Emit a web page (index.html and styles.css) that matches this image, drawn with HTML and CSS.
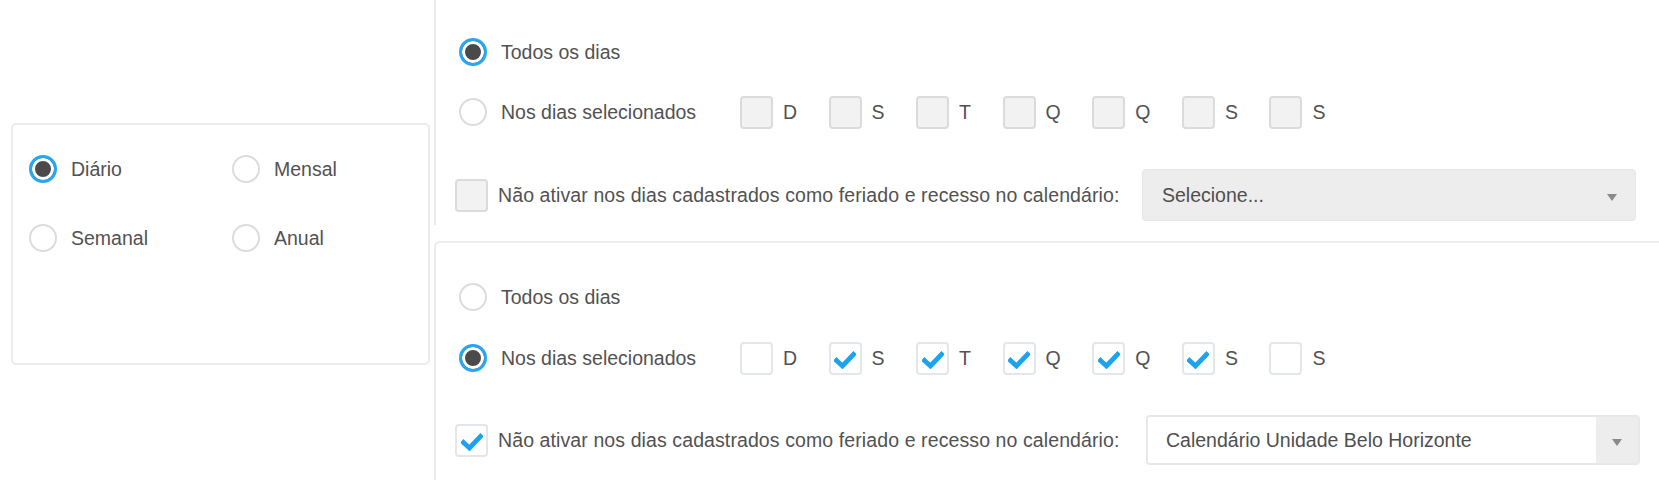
FILE: index.html
```html
<!DOCTYPE html>
<html lang="pt-BR">
<head>
<meta charset="utf-8">
<title>Recorrência</title>
<link rel="stylesheet" href="styles.css">
</head>
<body>
<div class="page">
  <div class="left">
    <div class="freq-card">
      <label class="radio-item"><span class="radio checked"></span><span>Diário</span></label>
      <label class="radio-item"><span class="radio"></span><span>Mensal</span></label>
      <label class="radio-item"><span class="radio"></span><span>Semanal</span></label>
      <label class="radio-item"><span class="radio"></span><span>Anual</span></label>
    </div>
  </div>
  <div class="right">
    <div class="panel panel-top">
      <div class="row">
        <label class="radio-item"><span class="radio checked"></span><span>Todos os dias</span></label>
      </div>
      <div class="row row-days">
        <label class="radio-item days-label"><span class="radio"></span><span>Nos dias selecionados</span></label>
        <div class="days">
          <span class="day"><span class="box disabled"></span>D</span>
          <span class="day"><span class="box disabled"></span>S</span>
          <span class="day"><span class="box disabled"></span>T</span>
          <span class="day"><span class="box disabled"></span>Q</span>
          <span class="day"><span class="box disabled"></span>Q</span>
          <span class="day"><span class="box disabled"></span>S</span>
          <span class="day"><span class="box disabled"></span>S</span>
        </div>
      </div>
      <div class="row row-holiday">
        <span class="box disabled"></span>
        <span class="holiday-label">Não ativar nos dias cadastrados como feriado e recesso no calendário:</span>
        <div class="select select-disabled"><span>Selecione...</span><span class="arrow"></span></div>
      </div>
    </div>
    <div class="panel panel-bottom">
      <div class="row">
        <label class="radio-item"><span class="radio"></span><span>Todos os dias</span></label>
      </div>
      <div class="row row-days">
        <label class="radio-item days-label"><span class="radio checked"></span><span>Nos dias selecionados</span></label>
        <div class="days">
          <span class="day"><span class="box"></span>D</span>
          <span class="day"><span class="box"><svg class="check" viewBox="0 0 22 18"><polyline points="2.5,9.5 8.5,15 19.5,3.5"/></svg></span>S</span>
          <span class="day"><span class="box"><svg class="check" viewBox="0 0 22 18"><polyline points="2.5,9.5 8.5,15 19.5,3.5"/></svg></span>T</span>
          <span class="day"><span class="box"><svg class="check" viewBox="0 0 22 18"><polyline points="2.5,9.5 8.5,15 19.5,3.5"/></svg></span>Q</span>
          <span class="day"><span class="box"><svg class="check" viewBox="0 0 22 18"><polyline points="2.5,9.5 8.5,15 19.5,3.5"/></svg></span>Q</span>
          <span class="day"><span class="box"><svg class="check" viewBox="0 0 22 18"><polyline points="2.5,9.5 8.5,15 19.5,3.5"/></svg></span>S</span>
          <span class="day"><span class="box"></span>S</span>
        </div>
      </div>
      <div class="row row-holiday">
        <span class="box"><svg class="check" viewBox="0 0 22 18"><polyline points="2.5,9.5 8.5,15 19.5,3.5"/></svg></span>
        <span class="holiday-label">Não ativar nos dias cadastrados como feriado e recesso no calendário:</span>
        <div class="select select-active"><span class="select-value">Calendário Unidade Belo Horizonte</span><span class="select-btn"><span class="arrow"></span></span></div>
      </div>
    </div>
  </div>
</div>
</body>
</html>
```
FILE: styles.css
```css
* { box-sizing: border-box; }

body {
  margin: 0;
  background: #ffffff;
  font-family: "Liberation Sans", Arial, sans-serif;
  font-size: 19.5px;
  color: #525252;
}

.page {
  display: flex;
  width: 1659px;
  height: 480px;
  overflow: hidden;
}

.left {
  flex: 0 0 434px;
  padding: 123px 0 0 11px;
}

.freq-card {
  width: 419px;
  height: 242px;
  border: 2px solid #eaecef;
  border-radius: 5px;
  padding: 24px 0 0 16px;
  display: grid;
  grid-template-columns: 203px 180px;
  grid-auto-rows: 40px;
  row-gap: 29px;
  align-content: start;
}

.radio-item {
  display: flex;
  align-items: center;
  gap: 14px;
  height: 40px;
}

.radio {
  flex: 0 0 28px;
  width: 28px;
  height: 28px;
  border-radius: 50%;
  border: 2px solid #dcdcdc;
  background: #ffffff;
}

.radio.checked {
  border: 3px solid #27a7f1;
  background: #4a4a4a;
  box-shadow: inset 0 0 0 3px #ffffff;
}

.right {
  flex: 1;
  display: flex;
  flex-direction: column;
}

.panel {
  border-left: 2px solid #eaecef;
}

.panel-top {
  height: 225px;
  padding: 32px 23px 0 23px;
}

.panel-bottom {
  flex: 1;
  margin-top: 16px;
  border-top: 2px solid #eaecef;
  border-top-left-radius: 6px;
  padding: 34px 19px 0 23px;
}

.row {
  display: flex;
  align-items: center;
  height: 40px;
}

.panel-top .row-days { margin-top: 20px; }
.panel-bottom .row-days { margin-top: 21px; }

.days-label {
  flex: 0 0 281px;
}

.days {
  display: flex;
  align-items: center;
  gap: 31.5px;
}

.day {
  display: flex;
  align-items: center;
  gap: 10px;
}

.box {
  flex: 0 0 33px;
  width: 33px;
  height: 33px;
  border: 2px solid #e3e6ea;
  border-radius: 4px;
  background: #ffffff;
  display: flex;
  align-items: center;
  justify-content: center;
}

.box.disabled {
  background: #f2f2f2;
  border-color: #dbdbdb;
}

.check {
  width: 22px;
  height: 18px;
  margin-top: 3px;
}

.check polyline {
  fill: none;
  stroke: #1ca3f0;
  stroke-width: 4.8;
  stroke-linecap: square;
  stroke-linejoin: miter;
}

.row-holiday {
  height: 52px;
  margin-left: -4px;
}

.panel-top .row-holiday { margin-top: 37px; }
.panel-bottom .row-holiday { margin-top: 37px; height: 50px; }

.holiday-label {
  margin-left: 10px;
  white-space: nowrap;
  letter-spacing: 0.1px;
}

.select {
  margin-left: auto;
  flex: 0 0 494px;
  height: 52px;
  border-radius: 4px;
  display: flex;
  align-items: center;
  color: #4f4f4f;
}

.select-disabled {
  background: #ededed;
  border: 1px solid #e4e7ea;
  padding: 0 18px 0 19px;
  justify-content: space-between;
}

.select-active {
  height: 50px;
  background: #ffffff;
  border: 2px solid #e6e9ec;
  padding-left: 18px;
  overflow: hidden;
}

.select-value {
  flex: 1;
}

.select-btn {
  flex: 0 0 42px;
  align-self: stretch;
  background: #ededed;
  display: flex;
  align-items: center;
  justify-content: center;
}

.arrow {
  width: 0;
  height: 0;
  border-left: 5px solid transparent;
  border-right: 5px solid transparent;
  border-top: 7px solid #8a8a8a;
  margin-top: 4px;
}
```
